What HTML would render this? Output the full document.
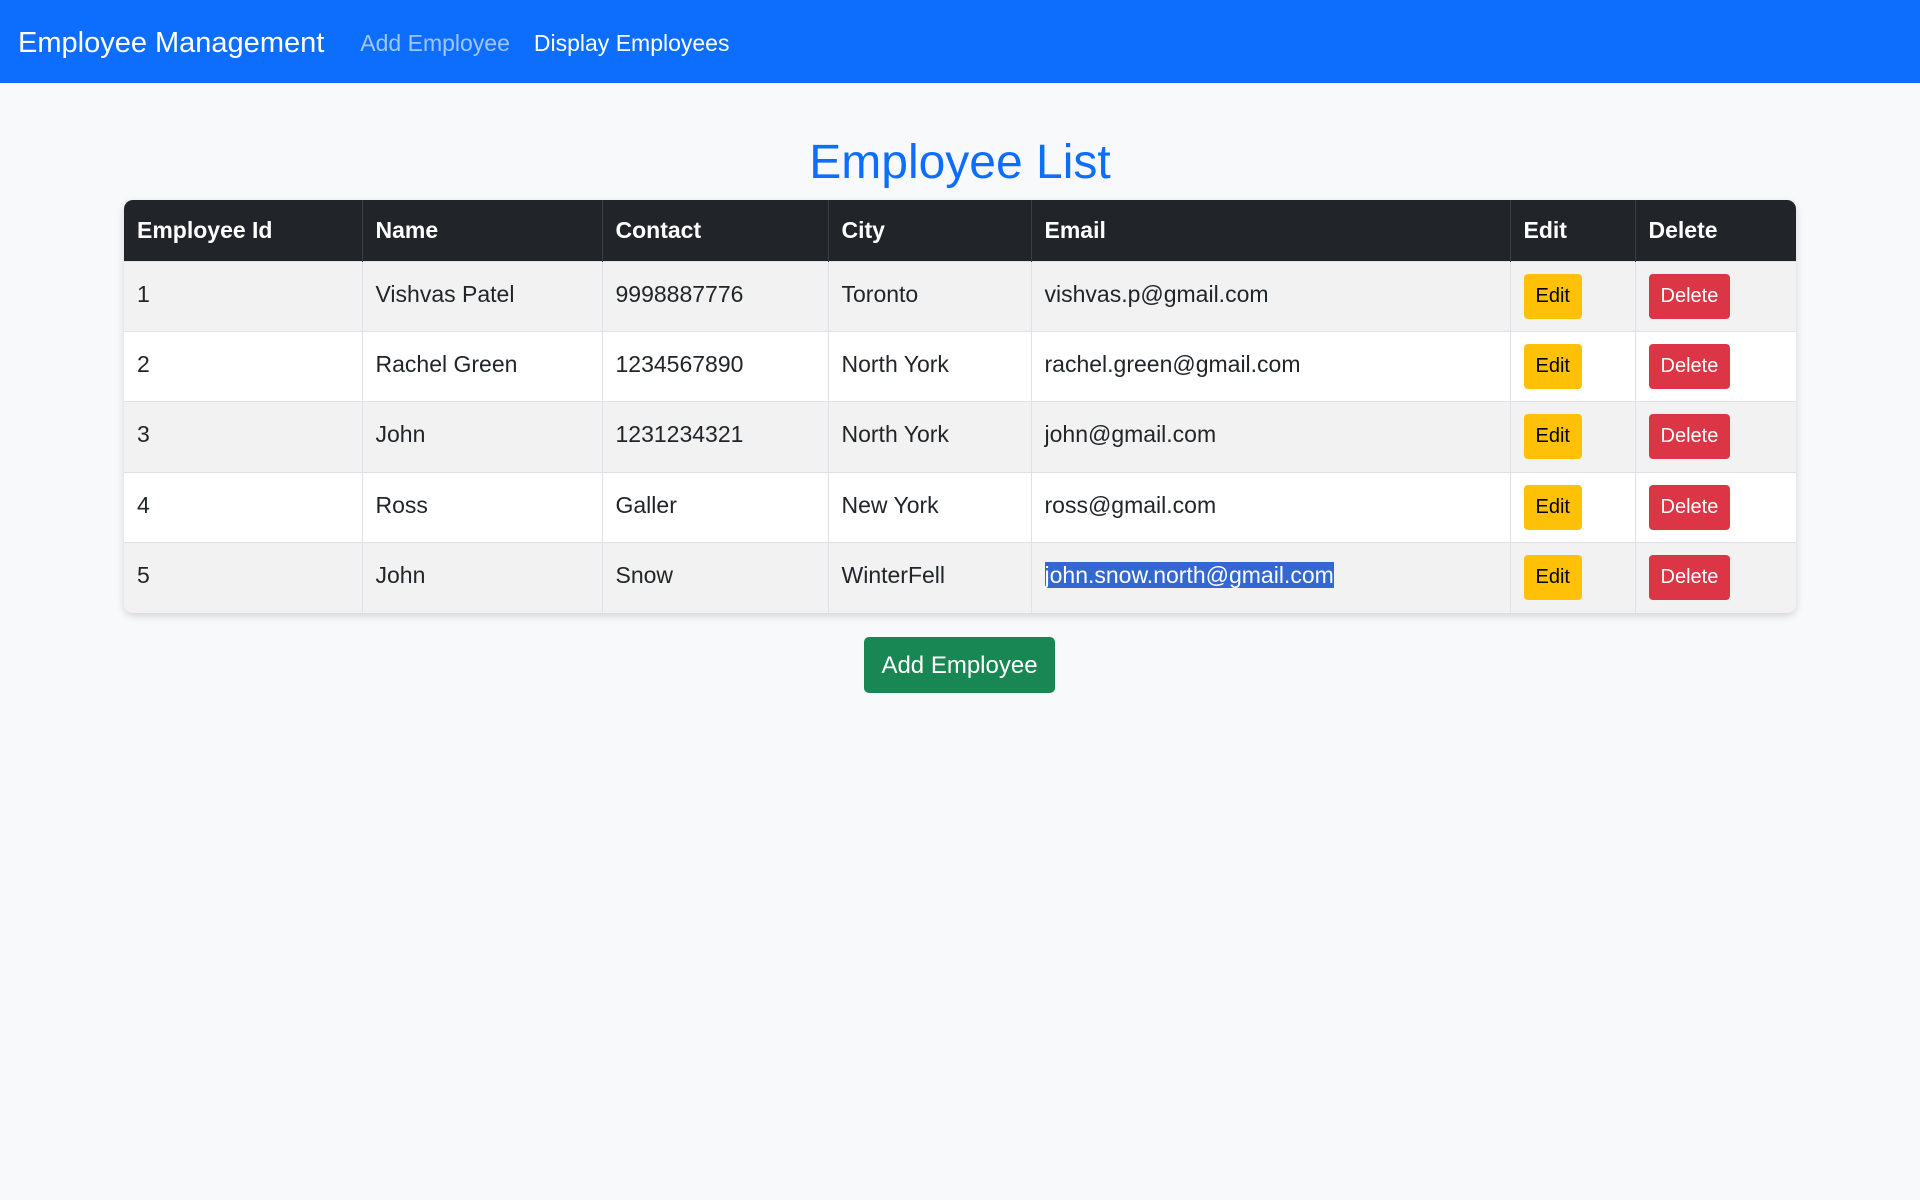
<!DOCTYPE html>
<html><head><meta charset="utf-8"><style>
*{box-sizing:border-box;margin:0;padding:0}
body{width:1920px;height:1200px;background:#f8f9fa;font-family:"Liberation Sans",sans-serif;color:#212529;overflow:hidden}
.nav{height:83px;background:#0d6efd;display:flex;align-items:center;padding-left:18px;padding-top:4px}
.brand{color:#fff;font-size:29px;margin-right:36px}
.nav a{font-size:23px;margin-right:24px;color:rgba(255,255,255,.6);text-decoration:none}
.nav a.w{color:#fff}
h2{color:#0d6efd;font-size:48px;font-weight:500;text-align:center;margin-top:52px;height:65px;line-height:55px}
.tw{position:absolute;left:124px;top:200px;width:1672px;border-radius:9px;overflow:hidden;box-shadow:0 3px 8px rgba(0,0,0,.15)}
table{border-collapse:collapse;width:100%;table-layout:fixed;font-size:23px}
th{background:#212529;color:#fff;text-align:left;font-weight:bold;height:61px;padding:0 13px;border-right:1px solid #3a3f44}
td{height:70.4px;padding:0 13px;vertical-align:top;padding-top:14px;border-right:1px solid #dee2e6;border-top:1px solid #dee2e6;line-height:36px}
tbody tr:nth-child(odd) td{background:#f2f2f2}
tbody tr:nth-child(even) td{background:#fff}
th:last-child,td:last-child{border-right:none}
.b{display:inline-block;height:45px;line-height:45px;font-size:20px;padding:0 12px;border-radius:4px;margin-top:-2px}
.e{background:#ffc107;color:#000}
.d{background:#dc3545;color:#fff}
.sel{background:#3367d1;color:#fff}
.add{position:absolute;left:864px;top:637px;width:191px;height:56px;background:#198754;color:#fff;font-size:24px;border-radius:5px;text-align:center;line-height:58px}
</style></head><body>
<div class="nav"><span class="brand">Employee Management</span><a>Add Employee</a><a class="w">Display Employees</a></div>
<h2>Employee List</h2>
<div class="tw"><table>
<colgroup><col style="width:238px"><col style="width:240px"><col style="width:226px"><col style="width:203px"><col style="width:479px"><col style="width:125px"><col style="width:161px"></colgroup>
<thead><tr><th>Employee Id</th><th>Name</th><th>Contact</th><th>City</th><th>Email</th><th>Edit</th><th>Delete</th></tr></thead>
<tbody>
<tr><td>1</td><td>Vishvas Patel</td><td>9998887776</td><td>Toronto</td><td>vishvas.p@gmail.com</td><td><span class="b e">Edit</span></td><td><span class="b d">Delete</span></td></tr>
<tr><td>2</td><td>Rachel Green</td><td>1234567890</td><td>North York</td><td>rachel.green@gmail.com</td><td><span class="b e">Edit</span></td><td><span class="b d">Delete</span></td></tr>
<tr><td>3</td><td>John</td><td>1231234321</td><td>North York</td><td>john@gmail.com</td><td><span class="b e">Edit</span></td><td><span class="b d">Delete</span></td></tr>
<tr><td>4</td><td>Ross</td><td>Galler</td><td>New York</td><td>ross@gmail.com</td><td><span class="b e">Edit</span></td><td><span class="b d">Delete</span></td></tr>
<tr><td>5</td><td>John</td><td>Snow</td><td>WinterFell</td><td><span class="sel">john.snow.north@gmail.com</span></td><td><span class="b e">Edit</span></td><td><span class="b d">Delete</span></td></tr>
</tbody>
</table></div>
<div class="add">Add Employee</div>
</body></html>
